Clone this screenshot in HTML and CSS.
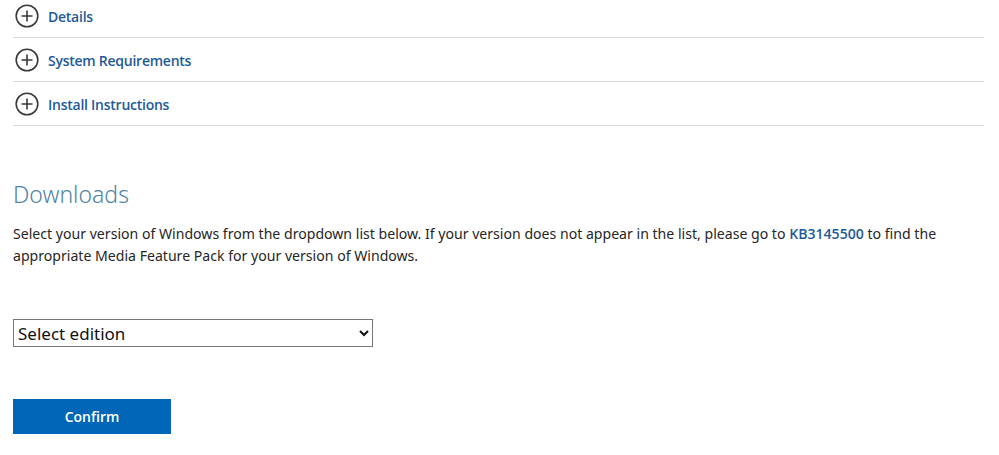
FILE: index.html
```html
<!DOCTYPE html>
<html lang="en">
<head>
    <meta charset="UTF-8">
    <meta name="viewport" content="width=device-width, initial-scale=1.0">
    <title>Media Feature Pack</title>
    <link rel="stylesheet" href="styles.css">
</head>
<body>

<div class="page">
    <ul class="expanders">
        <li class="expander">
            <svg class="plus" width="24" height="24" viewBox="0 0 24 24">
                <circle cx="12" cy="12" r="10.8" fill="none" stroke="#3a3a3a" stroke-width="1.6"/>
                <path d="M12 6.5v11M6.5 12h11" stroke="#3a3a3a" stroke-width="1.6"/>
            </svg>
            <a href="#">Details</a>
        </li>
        <li class="expander">
            <svg class="plus" width="24" height="24" viewBox="0 0 24 24">
                <circle cx="12" cy="12" r="10.8" fill="none" stroke="#3a3a3a" stroke-width="1.6"/>
                <path d="M12 6.5v11M6.5 12h11" stroke="#3a3a3a" stroke-width="1.6"/>
            </svg>
            <a href="#">System Requirements</a>
        </li>
        <li class="expander">
            <svg class="plus" width="24" height="24" viewBox="0 0 24 24">
                <circle cx="12" cy="12" r="10.8" fill="none" stroke="#3a3a3a" stroke-width="1.6"/>
                <path d="M12 6.5v11M6.5 12h11" stroke="#3a3a3a" stroke-width="1.6"/>
            </svg>
            <a href="#">Install Instructions</a>
        </li>
    </ul>

    <h2 class="downloads">Downloads</h2>
    <p class="intro">Select your version of Windows from the dropdown list below. If your version does not appear in the list, please go to <a href="#">KB3145500</a> to find the appropriate Media Feature Pack for your version of Windows.</p>

    <select class="edition">
        <option>Select edition</option>
    </select>

    <div>
        <button type="button" class="confirm">Confirm</button>
    </div>
</div>

</body>
</html>
```

FILE: styles.css
```css
body {
    margin: 0;
    background-color: #fff;
    font-family: "Noto Sans", "Open Sans", Arial, sans-serif;
    color: #262626;
}
.page {
    padding: 0 15px 0 13px;
    margin-top: -6px;
}
.expanders {
    list-style: none;
    margin: 0;
    padding: 0;
}
.expander {
    display: flex;
    align-items: center;
    gap: 9px;
    height: 43px;
    border-bottom: 1px solid #dadada;
}
.expander a {
    color: #1f5a98;
    font-family: "Open Sans", "Noto Sans", sans-serif;
    font-size: 14px;
    font-weight: 600;
    letter-spacing: -0.25px;
    line-height: 20px;
    padding-top: 2px;
    text-decoration: none;
}
.plus {
    display: block;
    margin-left: 2px;
}
.downloads {
    margin: 50px 0 0;
    font-size: 23px;
    font-weight: 300;
    line-height: 36px;
    color: #5283a6;
}
.intro {
    margin: 11px 0 0;
    font-size: 14.1px;
    line-height: 22px;
    padding-right: 20px;
}
.intro a {
    color: #1f5a98;
    font-family: "Open Sans", "Noto Sans", sans-serif;
    font-weight: 600;
    text-decoration: none;
}
.edition {
    display: block;
    margin-top: 52px;
    width: 360px;
    height: 28px;
    font-family: inherit;
    font-size: 17px;
    color: #111;
    background-color: #fff;
    border: 1px solid #777;
    border-radius: 0;
    padding: 0;
}
.confirm {
    margin-top: 52px;
    width: 158px;
    height: 35px;
    background-color: #0067b8;
    color: #fff;
    font-family: "Open Sans", "Noto Sans", sans-serif;
    font-size: 14px;
    font-weight: 600;
    border: none;
    cursor: pointer;
}
```
